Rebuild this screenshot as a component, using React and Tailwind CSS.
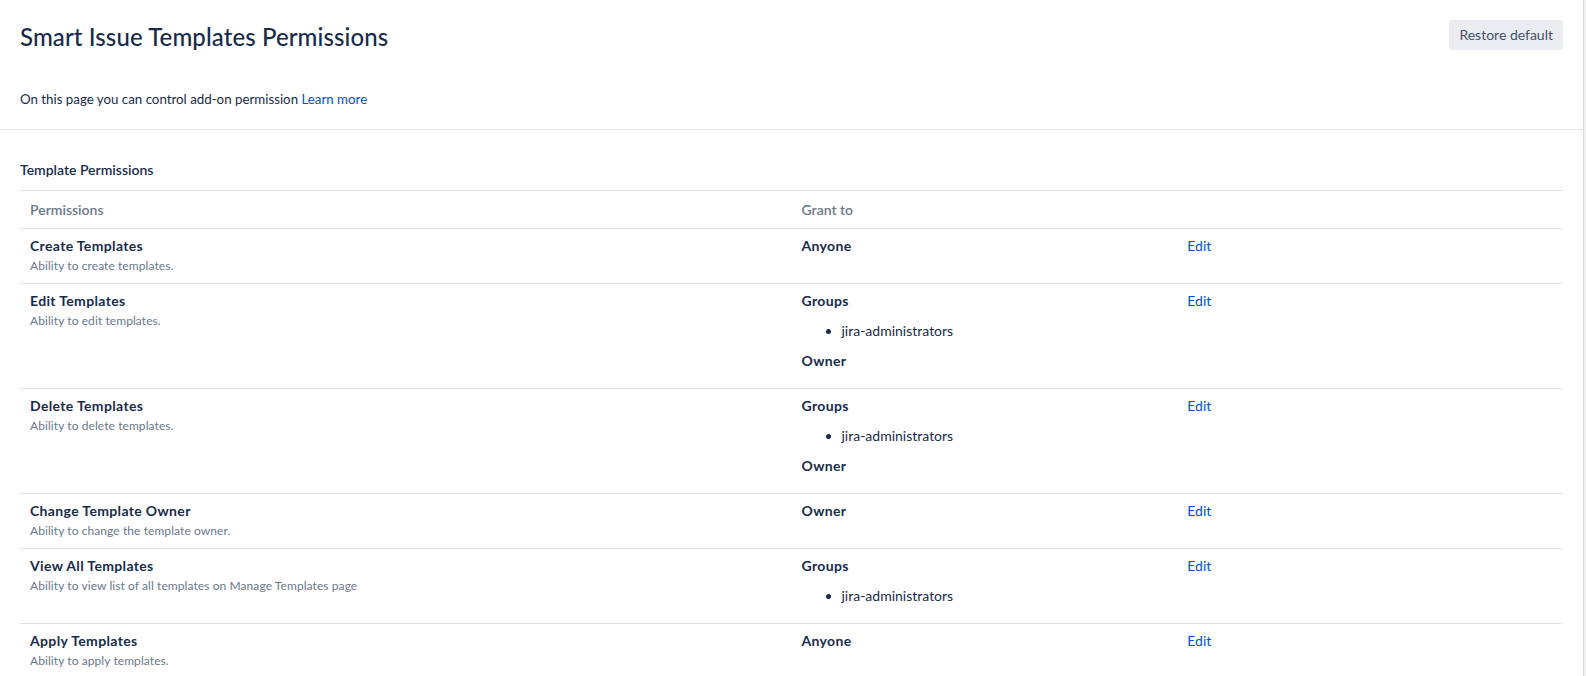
import React from 'react';

const rows = [
  {
    name: 'Create Templates',
    desc: 'Ability to create templates.',
    grant: [{ label: 'Anyone' }],
  },
  {
    name: 'Edit Templates',
    desc: 'Ability to edit templates.',
    grant: [{ label: 'Groups', items: ['jira-administrators'] }, { label: 'Owner' }],
  },
  {
    name: 'Delete Templates',
    desc: 'Ability to delete templates.',
    grant: [{ label: 'Groups', items: ['jira-administrators'] }, { label: 'Owner' }],
  },
  {
    name: 'Change Template Owner',
    desc: 'Ability to change the template owner.',
    grant: [{ label: 'Owner' }],
  },
  {
    name: 'View All Templates',
    desc: 'Ability to view list of all templates on Manage Templates page',
    grant: [{ label: 'Groups', items: ['jira-administrators'] }],
  },
  {
    name: 'Apply Templates',
    desc: 'Ability to apply templates.',
    grant: [{ label: 'Anyone' }],
  },
];

const Grant = ({ grant }) => (
  <div>
    {grant.map((g, i) => (
      <div key={g.label} className={i > 0 ? 'mt-[10px]' : ''}>
        <div className="font-bold tracking-[0.35px] leading-5">{g.label}</div>
        {g.items && (
          <ul className="mt-[10px] pl-[40px] list-disc">
            {g.items.map(item => (
              <li key={item} className="leading-5">
                {item}
              </li>
            ))}
          </ul>
        )}
      </div>
    ))}
  </div>
);

export default function App() {
  return (
    <div
      className="flex min-h-[676px] bg-white text-[14px] text-[#172b4d]"
      style={{ fontFamily: 'Lato, "Liberation Sans", sans-serif' }}
    >
      <div className="flex-1 min-w-0">
        {/* page header */}
        <div className="px-5 pt-5 pb-[20px] border-b border-[#e4e5e9]">
          <div className="flex items-start justify-between">
            <h1 className="mt-[2px] text-[24px] leading-[30px] font-medium tracking-[0.1px] text-[#172b4d]">
              Smart Issue Templates Permissions
            </h1>
            <button className="h-[30px] px-[10px] rounded-[3px] bg-[#ebecf0] text-[#42526e] text-[14px] leading-[30px]">
              Restore default
            </button>
          </div>
          <p className="mt-[37px] text-[13.3px] leading-5">
            On this page you can control add-on permission{' '}
            <a href="#" className="text-[#0052cc]">
              Learn more
            </a>
          </p>
        </div>

        {/* permissions table */}
        <div className="px-5 pt-[30px]">
          <h2 className="font-semibold leading-5">Template Permissions</h2>
          <div className="mt-[10px] border-t border-[#dfe1e6]">
            <div className="grid grid-cols-[2fr_1fr_1fr] border-b border-[#dfe1e6] text-[#6b778c] font-semibold">
              <div className="pl-[10px] pt-[9px] pb-[8px] leading-5">Permissions</div>
              <div className="pl-[10px] pt-[9px] pb-[8px] leading-5">Grant to</div>
              <div />
            </div>
            {rows.map(row => (
              <div
                key={row.name}
                className="grid grid-cols-[2fr_1fr_1fr] border-b border-[#dfe1e6] last:border-b-0"
              >
                <div className="pl-[10px] pt-[7px] pb-[9px]">
                  <div className="font-bold tracking-[0.35px] leading-5">{row.name}</div>
                  <div className="mt-[2px] text-[12px] tracking-[0.08px] leading-4 text-[#6b778c]">
                    {row.desc}
                  </div>
                </div>
                <div className="pl-[10px] pt-[7px] pb-[17px]">
                  <Grant grant={row.grant} />
                </div>
                <div className="pl-[10px] pt-[7px] leading-5">
                  <a href="#" className="text-[#0052cc]">
                    Edit
                  </a>
                </div>
              </div>
            ))}
          </div>
        </div>
      </div>
      <div className="w-[3px] bg-[#f1f1f1] border-l border-[#dadada]" />
    </div>
  );
}
